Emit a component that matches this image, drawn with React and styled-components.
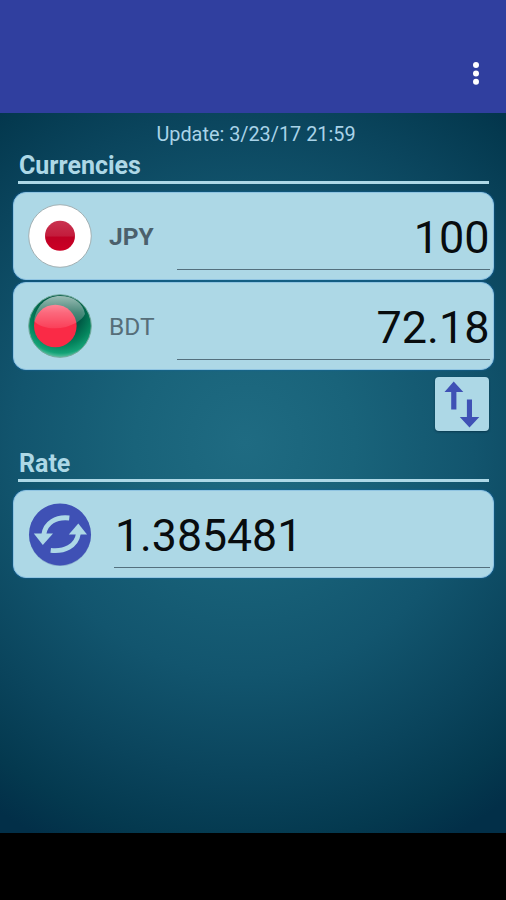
import React from "react";
import styled, { createGlobalStyle } from "styled-components";

const GlobalStyle = createGlobalStyle`
  * {
    box-sizing: border-box;
  }
  body {
    margin: 0;
    background: #000;
    font-family: Roboto, "Liberation Sans", sans-serif;
  }
`;

const Screen = styled.div`
  display: flex;
  flex-direction: column;
  width: 506px;
  height: 900px;
  overflow: hidden;
`;

const AppBar = styled.header`
  display: flex;
  justify-content: flex-end;
  align-items: flex-end;
  height: 113px;
  padding: 0 18px 25px 0;
  background: #303f9f;
`;

const MenuButton = styled.button`
  display: flex;
  padding: 0;
  border: none;
  background: none;
`;

const Content = styled.main`
  display: flex;
  flex-direction: column;
  height: 720px;
  padding: 9px 12px 0 13px;
  background: radial-gradient(
    ellipse 440px 445px at 245px 330px,
    #1f6b82 0%,
    #19637a 25%,
    #12556e 52%,
    #0a445c 75%,
    #04394f 90%,
    #022f48 100%
  );
`;

const Updated = styled.div`
  height: 26px;
  line-height: 26px;
  padding-left: 5px;
  font-size: 19.85px;
  text-align: center;
  color: #a9d3e8;
`;

const SectionTitle = styled.h2`
  height: 36px;
  margin: ${(props) => props.$top || 0} 5px 8px;
  padding-left: 1px;
  border-bottom: 3.5px solid #add8e6;
  font-size: 25px;
  line-height: 35px;
  font-weight: bold;
  color: #add8e6;
`;

const Card = styled.div`
  display: flex;
  align-items: center;
  height: 88px;
  margin-bottom: 2px;
  padding: 0 3px 0 14px;
  border: 1px solid #8fc4e2;
  border-radius: 13px;
  background: #add8e6;
  box-shadow: 0 0 2px #1668a8;
`;

const Code = styled.div`
  width: 68px;
  margin-left: 17px;
  font-size: 24.5px;
  font-weight: ${(props) => (props.$active ? 700 : 400)};
  color: ${(props) => (props.$active ? "#4b606c" : "#566e79")};
`;

const Amount = styled.div`
  flex: 1;
  align-self: flex-end;
  height: 67px;
  margin: 0 0 9px ${(props) => props.$gap || "0"};
  padding: 0 ${(props) => (props.$align === "right" ? "0.5px" : "1px")};
  border-bottom: 1.5px solid #54707e;
  font-size: ${(props) => (props.$align === "right" ? "45px" : "44.6px")};
  line-height: ${(props) => (props.$align === "right" ? "69px" : "70px")};
  text-align: ${(props) => props.$align || "left"};
  color: #080c0e;
`;

const Actions = styled.div`
  display: flex;
  justify-content: flex-end;
  padding: 5px 5px 0 0;
`;

const SwapButton = styled.button`
  display: flex;
  width: 54px;
  height: 54px;
  padding: 0;
  border: none;
  border-radius: 4px;
  background: #add8e6;
  box-shadow: 0 1px 2px rgba(0, 30, 50, 0.5);
`;

const RoundIcon = styled.svg`
  flex: none;
  width: 64px;
  height: 64px;
`;

const NavBar = styled.footer`
  height: 67px;
  background: #000;
`;

function MoreIcon() {
  return (
    <svg width="24" height="30" viewBox="0 0 24 30" fill="#fff">
      <circle cx="12" cy="7" r="3" />
      <circle cx="12" cy="15.4" r="3" />
      <circle cx="12" cy="23.8" r="3" />
    </svg>
  );
}

function JapanFlag() {
  return (
    <RoundIcon viewBox="0 0 64 64">
      <defs>
        <linearGradient id="jpRed" x1="0" y1="0" x2="0" y2="1">
          <stop offset="0" stopColor="#c93350" />
          <stop offset="0.5" stopColor="#c31c3c" />
          <stop offset="0.55" stopColor="#bf0024" />
          <stop offset="1" stopColor="#cc0025" />
        </linearGradient>
      </defs>
      <circle cx="32" cy="32" r="31.3" fill="#fff" stroke="#a2b0b3" />
      <circle cx="32" cy="31.8" r="15" fill="url(#jpRed)" />
    </RoundIcon>
  );
}

function BangladeshFlag() {
  return (
    <RoundIcon viewBox="0 0 64 64">
      <defs>
        <radialGradient id="bdGreen" cx="0.52" cy="0.3" r="0.72">
          <stop offset="0" stopColor="#00503e" />
          <stop offset="0.45" stopColor="#005a45" />
          <stop offset="0.7" stopColor="#04835c" />
          <stop offset="0.88" stopColor="#14a276" />
          <stop offset="1" stopColor="#6fcbae" />
        </radialGradient>
        <linearGradient id="bdGloss" x1="0" y1="0" x2="0" y2="1">
          <stop offset="0" stopColor="#fff" stopOpacity="0.6" />
          <stop offset="0.5" stopColor="#fff" stopOpacity="0.3" />
          <stop offset="1" stopColor="#fff" stopOpacity="0.1" />
        </linearGradient>
      </defs>
      <circle cx="32" cy="32" r="31.3" fill="url(#bdGreen)" stroke="#73a99b" />
      <circle cx="27.3" cy="32" r="21.3" fill="#fa2a46" />
      <path
        d="M6 27C8 12 18 2 32 2S55 9 57 20C54 26 47 30 38 33 26 36 12 34 6 27Z"
        fill="url(#bdGloss)"
      />
    </RoundIcon>
  );
}

function RefreshIcon() {
  return (
    <RoundIcon viewBox="0 0 64 64">
      <circle cx="32" cy="33.2" r="31" fill="#7190bd" opacity="0.6" />
      <circle cx="32" cy="32.4" r="31" fill="#3f51b5" />
      <g fill="none" stroke="#add8e6" strokeWidth="4.8">
        <path d="M41.3 16C28 14.500 17.500 20.500 15.800 32.500" />
        <path d="M22.700 48.400C36 50 48.500 44.500 50.400 31.500" />
      </g>
      <g fill="#add8e6">
        <path d="M5.800 31.500H25L14.800 43Z" />
        <path d="M40.800 32.500H59L50.300 21.500Z" />
      </g>
    </RoundIcon>
  );
}

function SwapIcon() {
  return (
    <svg width="54" height="54" viewBox="0 0 54 54" fill="#3f51b5">
      <path d="M18.700 4.500 28.300 15H21.400V32.500H16.200V15H9.500Z" />
      <path d="M34.500 50.500 24.800 40H31.900V22.500H37V40H44.300Z" />
    </svg>
  );
}

const currencies = [
  { code: "JPY", amount: "100", Flag: JapanFlag, active: true },
  { code: "BDT", amount: "72.18", Flag: BangladeshFlag, active: false },
];

function App() {
  return (
    <Screen>
      <GlobalStyle />
      <AppBar>
        <MenuButton aria-label="More options">
          <MoreIcon />
        </MenuButton>
      </AppBar>
      <Content>
        <Updated>Update: 3/23/17 21:59</Updated>
        <SectionTitle>Currencies</SectionTitle>
        {currencies.map(({ code, amount, Flag, active }) => (
          <Card key={code}>
            <Flag />
            <Code $active={active}>{code}</Code>
            <Amount $align="right">{amount}</Amount>
          </Card>
        ))}
        <Actions>
          <SwapButton aria-label="Swap currencies">
            <SwapIcon />
          </SwapButton>
        </Actions>
        <SectionTitle $top="15px">Rate</SectionTitle>
        <Card>
          <RefreshIcon />
          <Amount $gap="22px">1.385481</Amount>
        </Card>
      </Content>
      <NavBar />
    </Screen>
  );
}

export default App;
